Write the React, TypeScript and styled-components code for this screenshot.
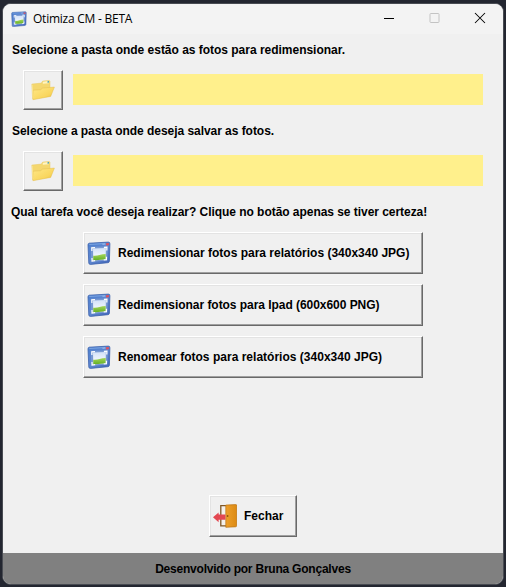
import React from 'react';
import styled, { createGlobalStyle } from 'styled-components';

const GlobalStyle = createGlobalStyle`
  *, *::before, *::after { box-sizing: border-box; }
  body { margin: 0; background: #232630; }
`;

const Desktop = styled.div`
  width: 506px;
  height: 587px;
  padding: 3px 2px 2px;
  background: #232630;
`;

const Window = styled.main`
  width: 502px;
  height: 582px;
  display: flex;
  flex-direction: column;
  overflow: hidden;
  border: 1px solid #484b52;
  border-radius: 9px;
  background: #f0f0f0;
  color: #000;
  font: bold 12px/16px 'Liberation Sans', Arial, sans-serif;
`;

const TitleBar = styled.header`
  height: 30px;
  flex: none;
  display: flex;
  align-items: center;
  padding-left: 8px;
  background: #f3f3f3;
`;

const Title = styled.h1`
  flex: 1;
  margin: 0 0 0 6px;
  font: 400 12px/16px 'Open Sans', 'Noto Sans', sans-serif;
  letter-spacing: -0.24px;
`;

const Controls = styled.div`
  display: flex;
  height: 100%;
`;

const Control = styled.button`
  width: 45.5px;
  padding: 0 0 2px;
  border: 0;
  background: none;
  display: grid;
  place-items: center;
`;

const Body = styled.section`
  flex: 1;
  display: flex;
  flex-direction: column;
`;

const Prompt = styled.p<{ $top: number; $left?: number; $spacing?: number }>`
  margin: ${p => p.$top}px 0 0 ${p => p.$left ?? 9}px;
  height: 16px;
  white-space: nowrap;
  letter-spacing: ${p => p.$spacing ?? 0}px;
`;

const PathRow = styled.div<{ $top: number }>`
  display: flex;
  align-items: flex-start;
  gap: 10px;
  height: 40px;
  margin: ${p => p.$top}px 20px 0;
`;

const PathField = styled.div`
  flex: 1;
  height: 31px;
  margin-top: 4px;
  background: #fff08c;
`;

const RaisedButton = styled.button<{ $width: number; $height: number }>`
  flex: none;
  width: ${p => p.$width}px;
  height: ${p => p.$height}px;
  display: flex;
  align-items: center;
  padding: 0 0 0 3px;
  border: 1px solid;
  border-color: #fff #696969 #696969 #fff;
  box-shadow: inset -1px -1px #a0a0a0, inset 1px 1px #e3e3e3;
  background: #f0f0f0;
  color: #000;
  font: inherit;
  text-align: left;
`;

const FolderButton = styled(RaisedButton).attrs({ $width: 40, $height: 40 })`
  justify-content: center;
  padding: 0 1px 0 0;
`;

const Caption = styled.span<{ $spacing?: number }>`
  margin-left: 7px;
  white-space: nowrap;
  letter-spacing: ${p => p.$spacing ?? 0}px;
`;

const TaskList = styled.div`
  display: flex;
  flex-direction: column;
  align-items: center;
  gap: 10px;
  margin-top: 12px;
`;

const CloseArea = styled.div`
  margin: auto 0 16px;
  display: flex;
  justify-content: center;
`;

const Footer = styled.footer`
  height: 31px;
  flex: none;
  display: grid;
  place-items: center;
  background: #808080;
  letter-spacing: -0.22px;
`;

function PictureIcon({ size }: { size: number }) {
  return (
    <svg width={size} height={size} viewBox="0 0 24 24">
      <defs>
        <linearGradient id="frame" x2="1" y2="1">
          <stop stopColor="#4b7fd0" /><stop offset=".5" stopColor="#5e86cf" /><stop offset="1" stopColor="#4164b8" />
        </linearGradient>
        <linearGradient id="sky" x2="0" y2="1">
          <stop stopColor="#d3e2f8" /><stop offset="1" stopColor="#fff" />
        </linearGradient>
        <linearGradient id="grass" x2="0" y2="1">
          <stop stopColor="#a5d75b" /><stop offset="1" stopColor="#62ae22" />
        </linearGradient>
      </defs>
      <path d="M2.2 2.2 21.3 1.1Q23 1 22.9 2.8l-.5 17.2q0 1.5-1.6 1.7L3.5 23.4q-1.6.1-1.7-1.4L1 3.9q0-1.5 1.2-1.7Z" fill="url(#frame)" stroke="#3c62ac" strokeWidth=".8" />
      <path d="m2.3 3.5 16-1" stroke="#7ba5e2" />
      <path d="M3.7 5.8 20.8 5.4 20.3 19.6 4.3 21Z" fill="#7899d2" />
      <path d="M6 7.5 18.9 7.1 18.6 18.2 6.3 19.4Z" fill="url(#sky)" />
      <path d="M6.2 14.8Q10 15 12.5 14q3-1 6.2-1.1L18.6 18.2 6.3 19.4Z" fill="url(#grass)" />
      <path d="m4.9 9.9-.1-3.1 3.2-.1M16.9 6.3l3-.1-.1 3.2M5 17l.1 3 3-.3M16.7 19l2.7-.3.1-2.9" fill="none" stroke="#fff" strokeWidth="1.2" />
      <path d="m19 2.3 2.9-.2v2.2l-2.9.2Z" fill="#dc5261" />
      <path d="M15.6 3.3h1.1M17.3 3.2h1" stroke="#dae7ff" strokeWidth=".7" />
    </svg>
  );
}

function FolderIcon() {
  return (
    <svg width="24" height="24" viewBox="0.4 0 24 24">
      <defs><linearGradient id="folder" x2="1" y2="1"><stop stopColor="#ffe887" /><stop offset=".65" stopColor="#f9d65e" /><stop offset="1" stopColor="#e6b934" /></linearGradient></defs>
      <path d="m1.2 6.1 9.5-1 1.3-2 6.7-.7.7 1v11L2 20.6Z" fill="#f4d76f" stroke="#e8cb68" strokeWidth=".5" />
      <path d="m12.2 3.7 6-.6v2.1l-6 .6Z" fill="#fff4c1" />
      <path d="m16.9 3.2 1.5-.1v1.5l-1.5.2Z" fill="#459eaf" />
      <path d="M2.5 12.2 10 11.7l2-1.7 11.8-.9-3.7 9.3-17.8 3.3Z" fill="url(#folder)" stroke="#e4bf50" strokeWidth=".5" />
      <path d="m1.6 6.8.8 13.5" stroke="#fff0a6" strokeWidth=".6" />
    </svg>
  );
}

function DoorIcon() {
  return (
    <svg width="24" height="24" viewBox="0 0 24 24">
      <defs><linearGradient id="door" x2="1"><stop stopColor="#eda02b" /><stop offset="1" stopColor="#dc8a13" /></linearGradient></defs>
      <path d="M7.8 1.6H22v20.2H7.8Z" fill="#f4f1ed" stroke="#805826" strokeWidth="1.3" />
      <path d="m12.8 1.1 9.8-.5q1.2 0 1.2 1v20q0 1-1.2 1.2l-9.8.5Z" fill="url(#door)" stroke="#ba7110" strokeWidth=".7" />
      <circle cx="14.6" cy="12" r=".9" fill="#8b5310" />
      <path d="M0 13.2 5.6 8.4v2.2h6.8v5.1H5.6v2.5Z" fill="#e34751" />
    </svg>
  );
}

export default function App() {
  return (
    <>
      <GlobalStyle />
      <Desktop>
        <Window>
          <TitleBar>
            <PictureIcon size={16} />
            <Title>Otimiza CM - BETA</Title>
            <Controls>
              <Control aria-label="Minimizar"><svg width="12" height="12"><path d="M1 6.5h10" stroke="#000" /></svg></Control>
              <Control aria-label="Maximizar" disabled><svg width="12" height="12"><rect x="1" y="1.5" width="9" height="9" rx=".7" fill="none" stroke="#c3c3c3" /></svg></Control>
              <Control aria-label="Fechar janela"><svg width="12" height="12"><path d="m1 1 10 10M11 1 1 11" stroke="#000" strokeWidth="1.05" /></svg></Control>
            </Controls>
          </TitleBar>
          <Body>
            <Prompt $top={8} $spacing={-0.02}>Selecione a pasta onde estão as fotos para redimensionar.</Prompt>
            <PathRow $top={12}>
              <FolderButton aria-label="Escolher pasta de origem"><FolderIcon /></FolderButton>
              <PathField />
            </PathRow>
            <Prompt $top={13} $spacing={-0.045}>Selecione a pasta onde deseja salvar as fotos.</Prompt>
            <PathRow $top={12}>
              <FolderButton aria-label="Escolher pasta de destino"><FolderIcon /></FolderButton>
              <PathField />
            </PathRow>
            <Prompt $top={13} $left={8} $spacing={-0.045}>Qual tarefa você deseja realizar? Clique no botão apenas se tiver certeza!</Prompt>
            <TaskList>
              <RaisedButton $width={340} $height={42}><PictureIcon size={24} /><Caption>Redimensionar fotos para relatórios (340x340 JPG)</Caption></RaisedButton>
              <RaisedButton $width={340} $height={42}><PictureIcon size={24} /><Caption $spacing={-0.045}>Redimensionar fotos para Ipad (600x600 PNG)</Caption></RaisedButton>
              <RaisedButton $width={340} $height={42}><PictureIcon size={24} /><Caption $spacing={0.015}>Renomear fotos para relatórios (340x340 JPG)</Caption></RaisedButton>
            </TaskList>
            <CloseArea>
              <RaisedButton $width={88} $height={42}><DoorIcon /><Caption>Fechar</Caption></RaisedButton>
            </CloseArea>
          </Body>
          <Footer>Desenvolvido por Bruna Gonçalves</Footer>
        </Window>
      </Desktop>
    </>
  );
}
